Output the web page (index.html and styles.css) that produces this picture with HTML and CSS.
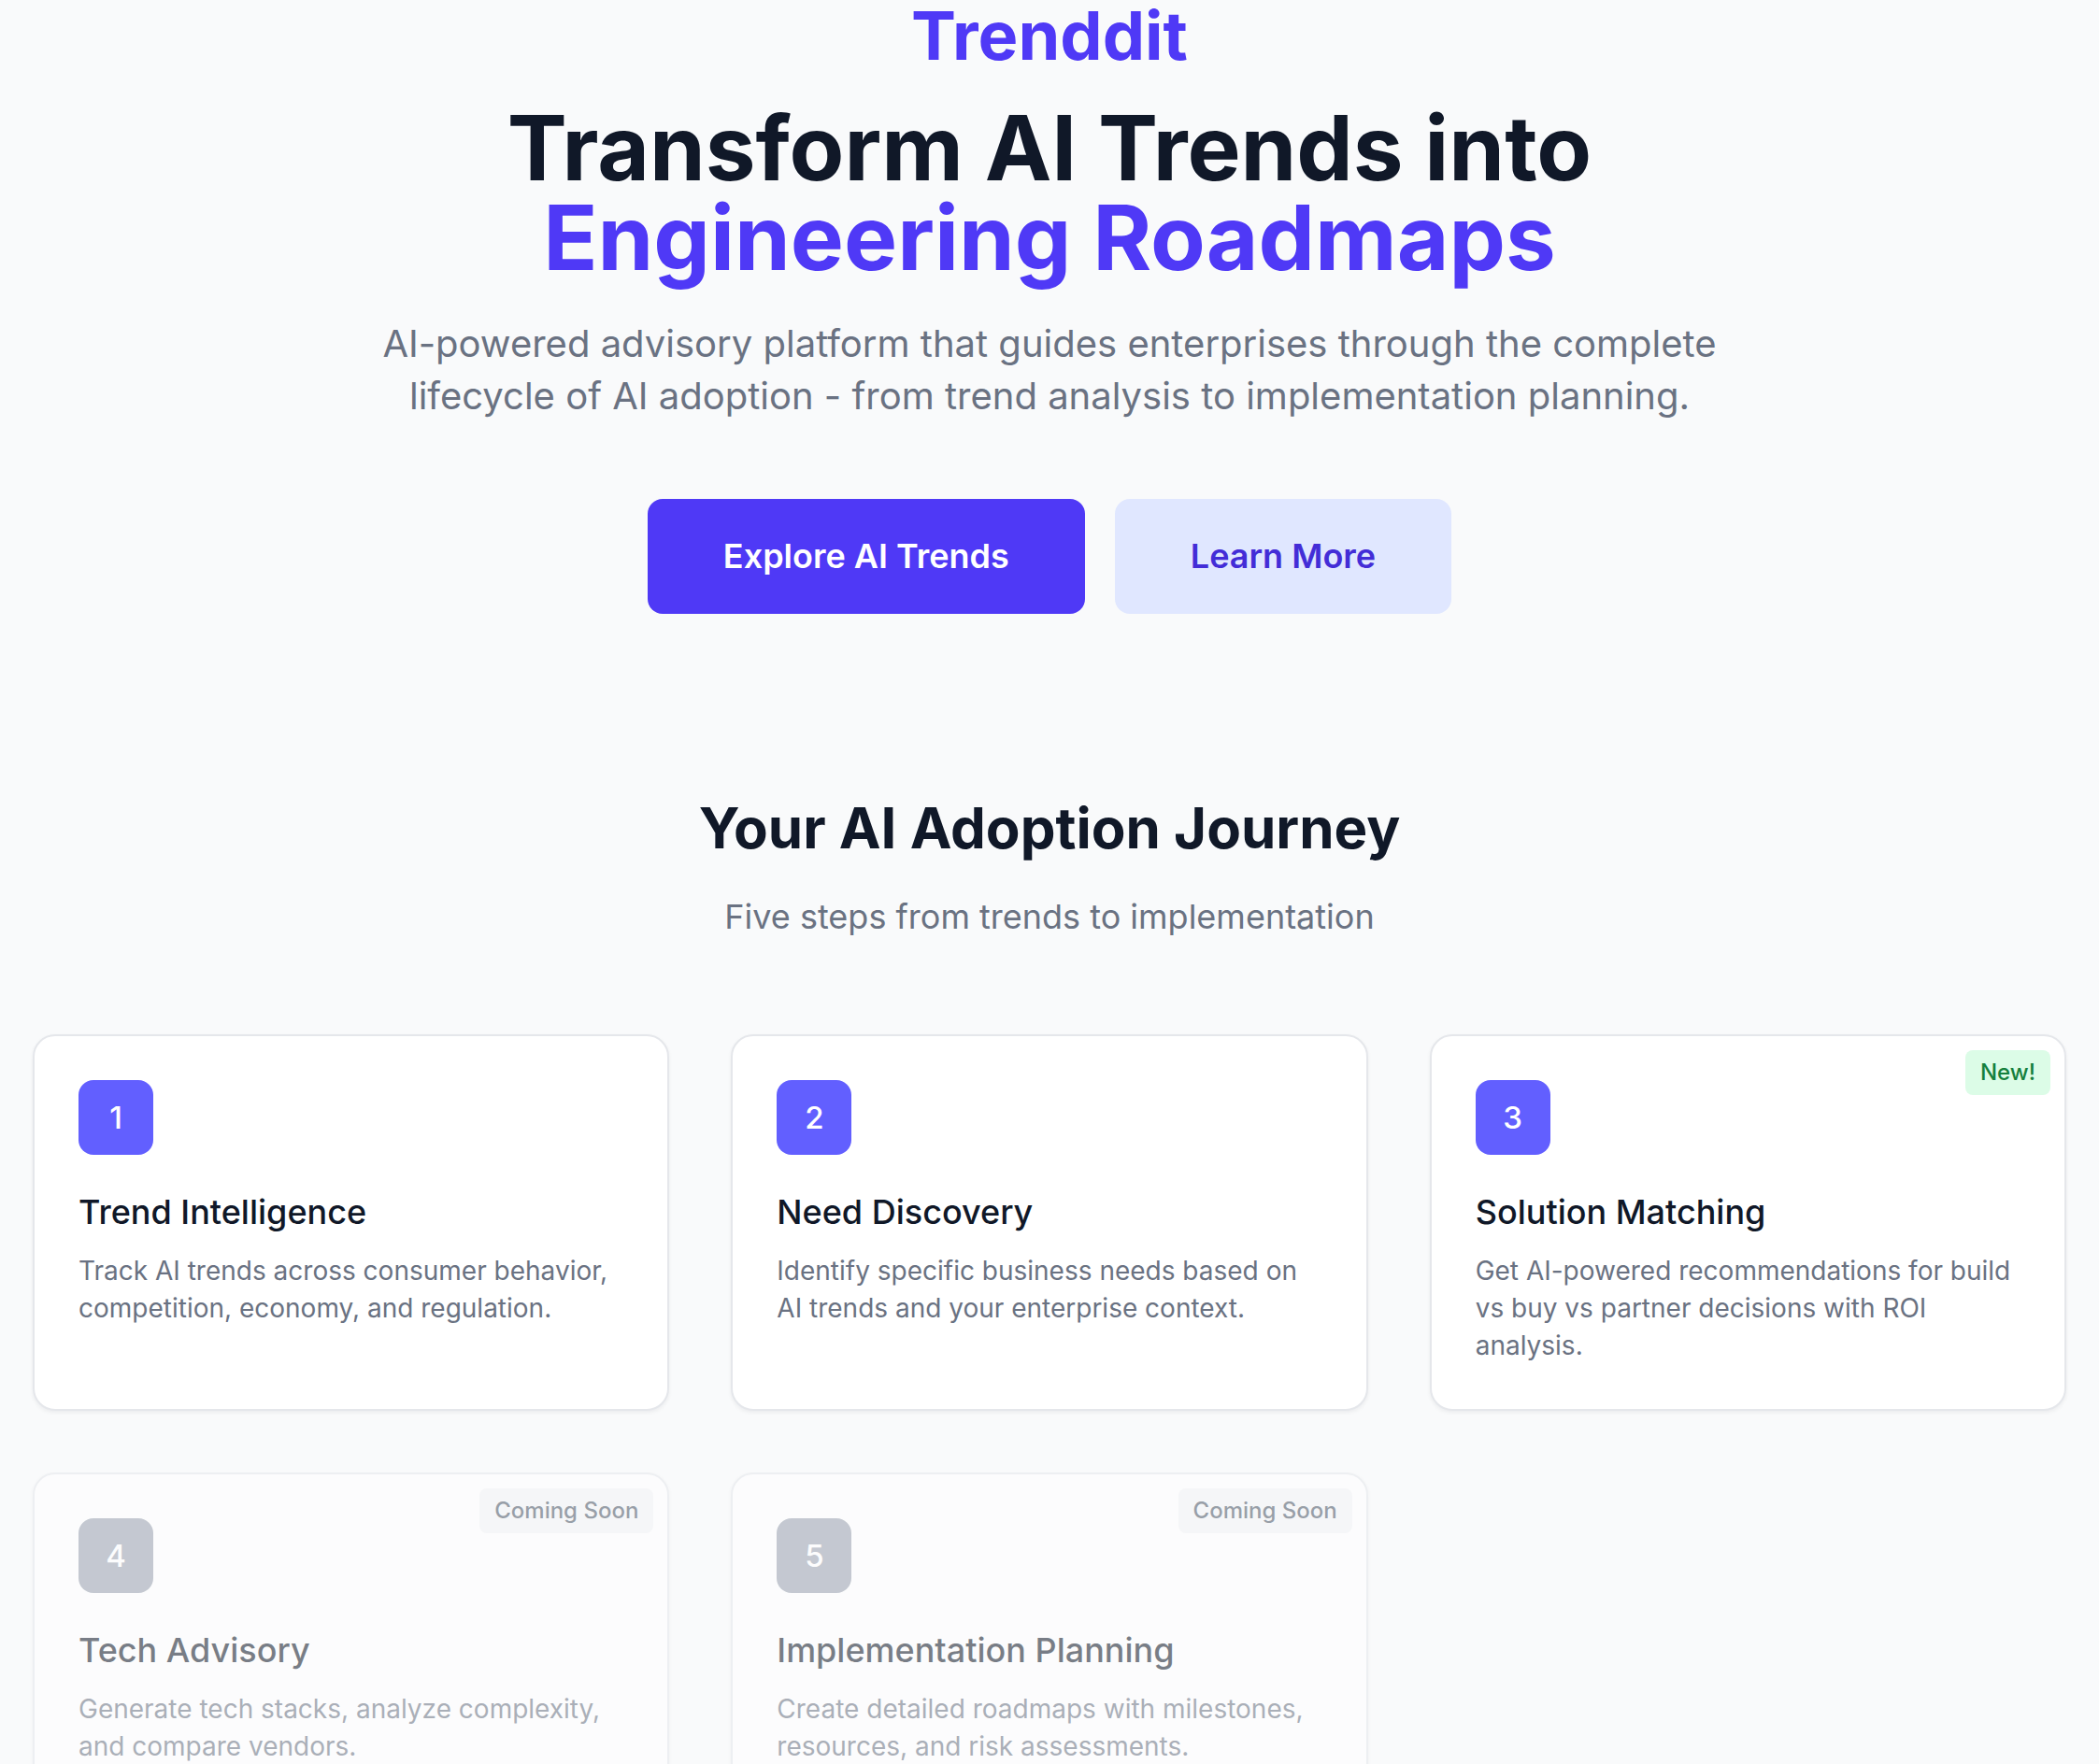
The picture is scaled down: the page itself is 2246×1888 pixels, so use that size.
FILE: index.html
```html
<!DOCTYPE html>
<html lang="en">
<head>
<meta charset="utf-8">
<title>Trenddit</title>
<link rel="stylesheet" href="styles.css">
</head>
<body>
<main class="page">
  <section class="hero">
    <div class="brand">Trenddit</div>
    <h1 class="title">Transform AI Trends into <span class="accent">Engineering Roadmaps</span></h1>
    <p class="lead">AI-powered advisory platform that guides enterprises through the complete lifecycle of AI adoption - from trend analysis to implementation planning.</p>
    <div class="actions">
      <a class="btn btn-primary" href="#">Explore AI Trends</a>
      <a class="btn btn-secondary" href="#">Learn More</a>
    </div>
  </section>

  <section class="journey">
    <h2 class="journey-title">Your AI Adoption Journey</h2>
    <p class="journey-sub">Five steps from trends to implementation</p>

    <div class="grid">
      <article class="card">
        <div class="num">1</div>
        <h3 class="card-title">Trend Intelligence</h3>
        <p class="card-desc">Track AI trends across consumer behavior, competition, economy, and regulation.</p>
      </article>
      <article class="card">
        <div class="num">2</div>
        <h3 class="card-title">Need Discovery</h3>
        <p class="card-desc">Identify specific business needs based on AI trends and your enterprise context.</p>
      </article>
      <article class="card">
        <span class="badge badge-new">New!</span>
        <div class="num">3</div>
        <h3 class="card-title">Solution Matching</h3>
        <p class="card-desc">Get AI-powered recommendations for build vs buy vs partner decisions with ROI analysis.</p>
      </article>
      <article class="card card-muted">
        <span class="badge badge-soon">Coming Soon</span>
        <div class="num num-muted">4</div>
        <h3 class="card-title">Tech Advisory</h3>
        <p class="card-desc">Generate tech stacks, analyze complexity, and compare vendors.</p>
      </article>
      <article class="card card-muted">
        <span class="badge badge-soon">Coming Soon</span>
        <div class="num num-muted">5</div>
        <h3 class="card-title">Implementation Planning</h3>
        <p class="card-desc">Create detailed roadmaps with milestones, resources, and risk assessments.</p>
      </article>
    </div>
  </section>
</main>
</body>
</html>
```

FILE: styles.css
```css
* { box-sizing: border-box; }

html, body {
  margin: 0;
  padding: 0;
  background: #f9fafb;
}

body {
  font-family: Inter, "Noto Sans", "Liberation Sans", sans-serif;
  color: #101828;
}

.page {
  padding-bottom: 80px;
}

.hero {
  text-align: center;
}

.brand {
  font-weight: 700;
  font-size: 72px;
  line-height: 76px;
  color: #4f39f6;
}

.title {
  margin: 34px 0 0;
  font-weight: 700;
  font-size: 96px;
  line-height: 96px;
  color: #101828;
}

.title .accent {
  display: block;
  color: #4f39f6;
}

.lead {
  max-width: 1536px;
  margin: 38px auto 0;
  font-size: 40px;
  line-height: 56px;
  color: #6a7282;
}

.actions {
  display: flex;
  justify-content: center;
  gap: 32px;
  margin-top: 82px;
}

.btn {
  display: inline-block;
  padding: 33px 81px;
  border-radius: 16px;
  font-weight: 600;
  font-size: 36px;
  line-height: 57px;
  text-decoration: none;
}

.btn-primary {
  background: #4f39f6;
  color: #ffffff;
}

.btn-secondary {
  background: #e0e7ff;
  color: #432dd7;
}

.journey {
  margin-top: 193px;
  text-align: center;
}

.journey-title {
  margin: 0;
  font-weight: 700;
  font-size: 60px;
  line-height: 72px;
  color: #101828;
}

.journey-sub {
  margin: 31px 0 0;
  font-size: 36px;
  line-height: 56px;
  color: #6a7282;
}

.grid {
  display: grid;
  grid-template-columns: repeat(3, 1fr);
  gap: 66px;
  padding: 0 35px;
  margin-top: 98px;
  text-align: left;
}

.card {
  position: relative;
  background: #ffffff;
  border: 2px solid #e5e7eb;
  border-radius: 24px;
  padding: 47px 47px 48px;
  box-shadow: 0 2px 4px rgba(16, 24, 40, 0.06);
}

.card-muted {
  opacity: 0.55;
}

.num {
  width: 80px;
  height: 80px;
  border-radius: 16px;
  background: #625fff;
  color: #ffffff;
  display: flex;
  align-items: center;
  justify-content: center;
  font-weight: 500;
  font-size: 33px;
  margin-bottom: 33px;
}

.num-muted {
  background: #99a1af;
}

.card-title {
  margin: 0 0 15px;
  font-weight: 500;
  font-size: 36px;
  line-height: 56px;
  color: #101828;
}

.card-desc {
  margin: 0;
  font-size: 28px;
  line-height: 40px;
  color: #6a7282;
}

.badge {
  position: absolute;
  top: 15px;
  right: 15px;
  padding: 8px 16px;
  border-radius: 8px;
  font-weight: 500;
  font-size: 24px;
  line-height: 32px;
}

.badge-new {
  background: #dcfce7;
  color: #15803d;
}

.badge-soon {
  background: #f3f4f6;
  color: #4a5565;
}
```
